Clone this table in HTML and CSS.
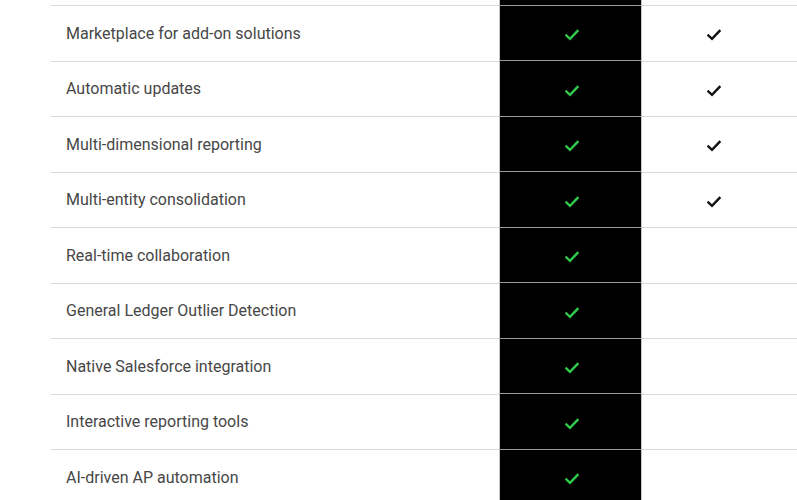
FILE: index.html
```html
<!DOCTYPE html>
<html>
<head>
<meta charset="utf-8">
<link rel="stylesheet" href="styles.css">
</head>
<body>
<div class="table">
  <div class="row row-top"><div class="cell label"></div><div class="cell dark"></div><div class="cell"></div></div>
  <div class="row"><div class="cell label">Marketplace for add-on solutions</div><div class="cell dark"><svg class="chk green" viewBox="0 0 14 12"><path d="M1.5 6.5 L5 9.8 L12.5 2"/></svg></div><div class="cell plain"><svg class="chk black" viewBox="0 0 14 12"><path d="M1.5 6.5 L5 9.8 L12.5 2"/></svg></div></div>
  <div class="row"><div class="cell label">Automatic updates</div><div class="cell dark"><svg class="chk green" viewBox="0 0 14 12"><path d="M1.5 6.5 L5 9.8 L12.5 2"/></svg></div><div class="cell plain"><svg class="chk black" viewBox="0 0 14 12"><path d="M1.5 6.5 L5 9.8 L12.5 2"/></svg></div></div>
  <div class="row"><div class="cell label">Multi-dimensional reporting</div><div class="cell dark"><svg class="chk green" viewBox="0 0 14 12"><path d="M1.5 6.5 L5 9.8 L12.5 2"/></svg></div><div class="cell plain"><svg class="chk black" viewBox="0 0 14 12"><path d="M1.5 6.5 L5 9.8 L12.5 2"/></svg></div></div>
  <div class="row"><div class="cell label">Multi-entity consolidation</div><div class="cell dark"><svg class="chk green" viewBox="0 0 14 12"><path d="M1.5 6.5 L5 9.8 L12.5 2"/></svg></div><div class="cell plain"><svg class="chk black" viewBox="0 0 14 12"><path d="M1.5 6.5 L5 9.8 L12.5 2"/></svg></div></div>
  <div class="row"><div class="cell label">Real-time collaboration</div><div class="cell dark"><svg class="chk green" viewBox="0 0 14 12"><path d="M1.5 6.5 L5 9.8 L12.5 2"/></svg></div><div class="cell plain"></div></div>
  <div class="row"><div class="cell label">General Ledger Outlier Detection</div><div class="cell dark"><svg class="chk green" viewBox="0 0 14 12"><path d="M1.5 6.5 L5 9.8 L12.5 2"/></svg></div><div class="cell plain"></div></div>
  <div class="row"><div class="cell label">Native Salesforce integration</div><div class="cell dark"><svg class="chk green" viewBox="0 0 14 12"><path d="M1.5 6.5 L5 9.8 L12.5 2"/></svg></div><div class="cell plain"></div></div>
  <div class="row"><div class="cell label">Interactive reporting tools</div><div class="cell dark"><svg class="chk green" viewBox="0 0 14 12"><path d="M1.5 6.5 L5 9.8 L12.5 2"/></svg></div><div class="cell plain"></div></div>
  <div class="row"><div class="cell label">AI-driven AP automation</div><div class="cell dark"><svg class="chk green" viewBox="0 0 14 12"><path d="M1.5 6.5 L5 9.8 L12.5 2"/></svg></div><div class="cell plain"></div></div>
</div>
</body>
</html>
```
FILE: styles.css
```css
html, body {
  margin: 0;
  padding: 0;
  background: #ffffff;
  overflow: hidden;
}
.table {
  margin-left: 51px;
  font-family: "Roboto", "Liberation Sans", sans-serif;
  font-size: 16px;
  color: #474747;
}
.row {
  display: grid;
  grid-template-columns: 448px 143px 1fr;
  height: 55.5px;
  box-sizing: border-box;
  border-top: 1.5px solid #d9d9d9;
}
.row-top {
  height: 5px;
  border-top: none;
}
.cell {
  display: flex;
  align-items: center;
}
.label {
  padding-left: 15px;
}
.dark {
  background: #000;
  justify-content: center;
  border-left: 1px solid #c8c8c8;
  border-right: 1px solid #c8c8c8;
  margin-top: -1.5px;
  border-top: 1.5px solid #9c9c9c;
}
.row-top .dark {
  margin-top: 0;
  border-top: none;
}
.dark .chk {
  margin-left: 2px;
}
.plain {
  justify-content: center;
  padding-right: 12px;
}
.chk {
  width: 14px;
  height: 12px;
  margin-top: 4px;
  fill: none;
  stroke-width: 2.4;
  stroke-linecap: square;
  stroke-linejoin: miter;
}
.green { stroke: #2fcb4c; }
.black { stroke: #111; }
```
